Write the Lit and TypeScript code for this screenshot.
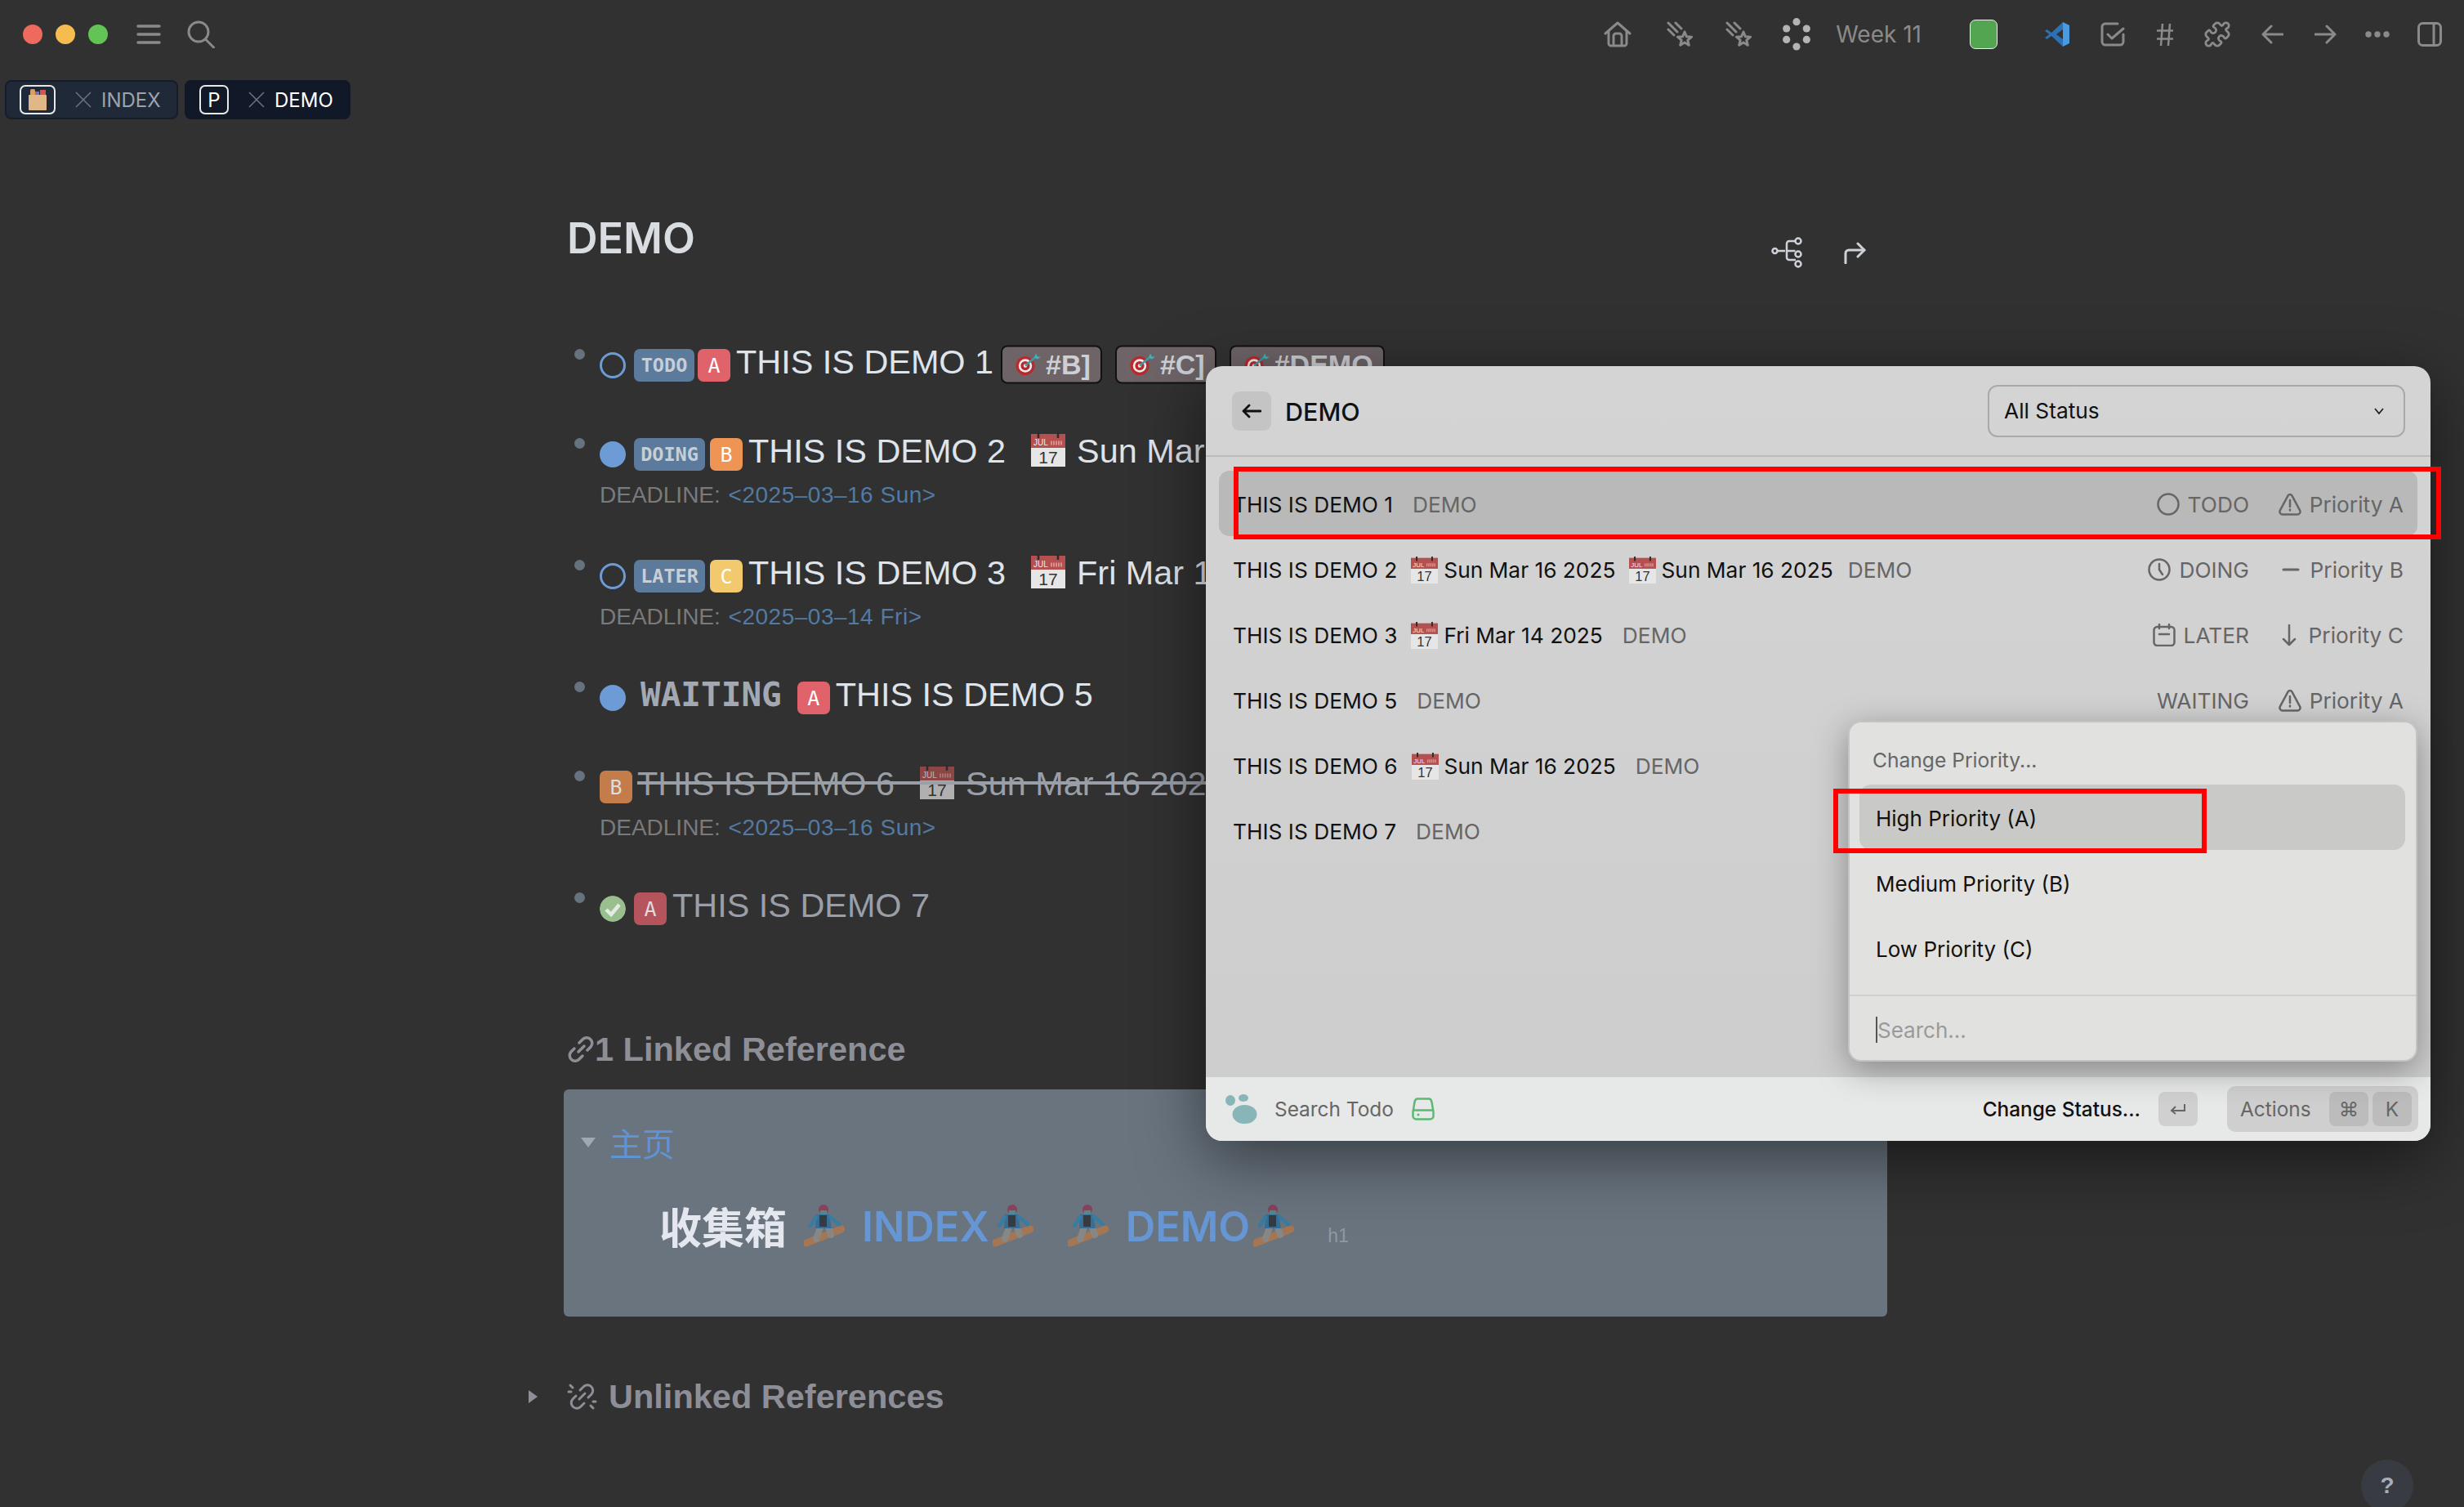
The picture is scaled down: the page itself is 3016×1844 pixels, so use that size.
import { LitElement, html, css } from "lit";
import { customElement } from "lit/decorators.js";

const GRAY = "#8a8a8a";

// emoji are drawn by hand, there is no colour emoji font in the sandbox
const calendar = (size: number) => html`
  <svg class="emoji" width=${size} height=${size} viewBox="0 0 42 42">
    <rect x="0" y="2" width="42" height="40" fill="#e6e6e6" />
    <rect x="0" y="2" width="42" height="17" fill="#b4504f" />
    <path d="M9 0v7M33 0v7" stroke="#2b2b2b" stroke-width="2.5" />
    <text x="3" y="16" font-size="10" fill="#eee" font-family="Liberation Sans">JUL</text>
    <path d="M24 13h15" stroke="#d98f8c" stroke-width="5" stroke-dasharray="2 1" />
    <text x="21" y="38" font-size="21" fill="#333" text-anchor="middle" font-family="Liberation Sans">17</text>
  </svg>
`;

const dart = html`
  <svg class="emoji" width="32" height="28" viewBox="0 0 32 28">
    <circle cx="12" cy="16" r="11.5" fill="#b82a2e" />
    <circle cx="12" cy="16" r="8.2" fill="#eee" />
    <circle cx="12" cy="16" r="5.6" fill="#b82a2e" />
    <circle cx="12" cy="16" r="2.2" fill="#eee" />
    <path d="M12 16 25 5" stroke="#3f9aa0" stroke-width="2.5" />
    <path d="M23 6l2-5 2 4 4 0-4 3z" fill="#3fb4b8" />
  </svg>
`;

const snowboarder = html`
  <svg class="emoji" width="50" height="52" viewBox="0 0 50 52">
    <path d="M3 47 46 30" stroke="#b0774c" stroke-width="9" stroke-linecap="round" />
    <path d="M20 28 15 42M30 28 33 37" stroke="#8d8c88" stroke-width="8" stroke-linecap="round" />
    <path d="M15 12h16l3 17H14z" fill="#2f6d9c" />
    <rect x="19" y="13" width="9" height="14" fill="#2c3238" />
    <path d="M32 15 43 24M15 15 8 26" stroke="#2f7fa8" stroke-width="4.5" stroke-linecap="round" />
    <circle cx="24" cy="6" r="6" fill="#8c3a55" />
    <rect x="20" y="7" width="8" height="5" fill="#4f8f88" />
  </svg>
`;

const warning = html`
  <svg width="28" height="28" viewBox="0 0 28 28" fill="none" stroke="#666" stroke-width="2.5" stroke-linejoin="round">
    <path d="M11.6 3.4 1.8 21.6c-1 2 .4 4.9 2.6 4.9h19.2c2.2 0 3.6-2.9 2.6-4.9L16.4 3.4c-1-2-3.8-2-4.8 0z" />
    <path d="M14 9v8M14 20.5v1" stroke-linecap="round" />
  </svg>
`;

const statusIcons: Record<string, unknown> = {
  TODO: html`<svg width="28" height="28" viewBox="0 0 28 28" fill="none" stroke="#666" stroke-width="2.5"><circle cx="14" cy="14" r="12.5" /></svg>`,
  DOING: html`<svg width="28" height="28" viewBox="0 0 28 28" fill="none" stroke="#666" stroke-width="2.5" stroke-linecap="round"><circle cx="14" cy="14" r="12.5" /><path d="M14 7v7l4 6" /></svg>`,
  LATER: html`<svg width="28" height="28" viewBox="0 0 28 28" fill="none" stroke="#666" stroke-width="2.5" stroke-linecap="round"><rect x="1.5" y="4" width="25" height="23" rx="4" /><path d="M8 1v5M20 1v5M8 13h12" /></svg>`,
};

const priorityIcons: Record<string, unknown> = {
  A: warning,
  B: html`<svg width="28" height="28" viewBox="0 0 28 28" fill="none" stroke="#666" stroke-width="3" stroke-linecap="round"><path d="M5 14h18" /></svg>`,
  C: html`<svg width="28" height="28" viewBox="0 0 28 28" fill="none" stroke="#666" stroke-width="2.5" stroke-linecap="round" stroke-linejoin="round"><path d="M14 2v24M7 19l7 7 7-7" /></svg>`,
};

const shootingStar = html`
  <svg width="32" height="32" viewBox="0 0 32 32" fill="none" stroke=${GRAY} stroke-width="3" stroke-linejoin="round" stroke-linecap="round">
    <path d="M11 2l7 7M2 2l11 11M2 10l7 7" />
    <path d="M22 13l2.4 5.8 6.2.4-4.8 4 1.5 6.1-5.3-3.3-5.3 3.3 1.5-6.1-4.8-4 6.2-.4z" />
  </svg>
`;

// widths come out of the reference, gap is the distance to the previous item
const topIcons = [
  {
    gap: 0,
    icon: html`<svg width="34" height="34" viewBox="0 0 34 34" fill="none" stroke=${GRAY} stroke-width="3" stroke-linecap="round" stroke-linejoin="round"><path d="M2 16 17 3l15 13" /><path d="M6 13v15a3 3 0 0 0 3 3h16a3 3 0 0 0 3-3V13" /><path d="M12 30V19a3 3 0 0 1 3-3h4a3 3 0 0 1 3 3v11" /></svg>`,
  },
  { gap: 43, icon: shootingStar },
  { gap: 40, icon: shootingStar },
  {
    gap: 38,
    icon: html`<svg width="34" height="40" viewBox="0 0 34 40" fill="#b4b4b4"><circle cx="17" cy="4.7" r="4.6" /><circle cx="4.7" cy="13" r="4.6" /><circle cx="29.3" cy="13" r="4.6" /><circle cx="4.7" cy="26.4" r="4.6" /><circle cx="29.3" cy="26.4" r="4.6" /><circle cx="17" cy="35" r="4.6" /></svg>`,
  },
  { gap: 31, icon: html`<span class="week">Week 11</span>` },
  { gap: 59, icon: html`<span class="swatch"></span>` },
  {
    gap: 57,
    icon: html`<svg width="32" height="32" viewBox="0 0 32 32"><path fill="#2c70b5" d="M23 1 9 14 3.5 10 1 12l5.5 4L1 20l2.5 2L9 18l14 13v-9l-8-6 8-6z" /><path fill="#4a9ae0" d="m23 1 8 4v22l-8 4z" /></svg>`,
  },
  {
    gap: 37,
    icon: html`<svg width="30" height="30" viewBox="0 0 30 30" fill="none" stroke=${GRAY} stroke-width="3" stroke-linecap="round" stroke-linejoin="round"><path d="M21 2H6a4 4 0 0 0-4 4v18a4 4 0 0 0 4 4h18a4 4 0 0 0 4-4V15" /><path d="m9 15 5 5 14-12" /></svg>`,
  },
  {
    gap: 38,
    icon: html`<svg width="22" height="29" viewBox="0 0 22 29" fill="none" stroke=${GRAY} stroke-width="2.5"><path d="M8 1 6 28M17 1l-2 27M1 9.500h20M1 19.500h20" /></svg>`,
  },
  {
    gap: 36,
    icon: html`<svg width="34" height="34" viewBox="0 0 24 24" fill="none" stroke=${GRAY} stroke-width="2" stroke-linejoin="round"><path d="M19.439 7.85c-.049.322.059.648.289.878l1.568 1.568c.47.47.706 1.087.706 1.704s-.235 1.233-.706 1.704l-1.611 1.611a.98.98 0 0 1-.837.276c-.47-.07-.802-.48-.968-.925a2.501 2.501 0 1 0-3.214 3.214c.446.166.855.497.925.968a.979.979 0 0 1-.276.837l-1.61 1.61a2.404 2.404 0 0 1-1.705.707 2.402 2.402 0 0 1-1.704-.706l-1.568-1.568a1.026 1.026 0 0 0-.877-.29c-.493.074-.84.504-1.02.968a2.5 2.5 0 1 1-3.237-3.237c.464-.18.894-.527.967-1.02a1.026 1.026 0 0 0-.289-.877l-1.568-1.568A2.402 2.402 0 0 1 1.998 12c0-.617.236-1.234.706-1.704L4.23 8.77c.24-.24.581-.353.917-.303.515.077.877.528 1.073 1.01a2.5 2.5 0 1 0 3.259-3.259c-.482-.196-.933-.558-1.01-1.073-.05-.336.062-.676.303-.917l1.525-1.525A2.402 2.402 0 0 1 12 1.998c.617 0 1.234.236 1.704.706l1.568 1.568c.23.23.556.338.877.29.493-.074.84-.504 1.02-.968a2.5 2.5 0 1 1 3.237 3.237c-.464.18-.894.527-.967 1.02Z" /></svg>`,
  },
  {
    gap: 37,
    icon: html`<svg width="27" height="24" viewBox="0 0 27 24" fill="none" stroke=${GRAY} stroke-width="3" stroke-linecap="round" stroke-linejoin="round"><path d="M26 12H2M12 2 2 12l10 10" /></svg>`,
  },
  {
    gap: 38,
    icon: html`<svg width="27" height="24" viewBox="0 0 27 24" fill="none" stroke=${GRAY} stroke-width="3" stroke-linecap="round" stroke-linejoin="round"><path d="M1 12h24M15 2l10 10-10 10" /></svg>`,
  },
  {
    gap: 35,
    icon: html`<svg width="30" height="8" viewBox="0 0 30 8" fill=${GRAY}><circle cx="4" cy="4" r="3.700" /><circle cx="15" cy="4" r="3.700" /><circle cx="26" cy="4" r="3.700" /></svg>`,
  },
  {
    gap: 34,
    icon: html`<svg width="30" height="30" viewBox="0 0 30 30" fill="none" stroke=${GRAY} stroke-width="3"><rect x="1.500" y="1.500" width="27" height="27" rx="5" /><path d="M20 2v26" /></svg>`,
  },
];

type Todo = {
  title: string;
  dates: string[];
  status?: string;
  priority?: string;
  tight?: boolean;
};

const todos: Todo[] = [
  { title: "THIS IS DEMO 1", dates: [], status: "TODO", priority: "A" },
  { title: "THIS IS DEMO 2", dates: ["Sun Mar 16 2025", "Sun Mar 16 2025"], status: "DOING", priority: "B", tight: true },
  { title: "THIS IS DEMO 3", dates: ["Fri Mar 14 2025"], status: "LATER", priority: "C" },
  { title: "THIS IS DEMO 5", dates: [], status: "WAITING", priority: "A" },
  { title: "THIS IS DEMO 6", dates: ["Sun Mar 16 2025"] },
  { title: "THIS IS DEMO 7", dates: [] },
];

@customElement("app-root")
export class AppRoot extends LitElement {
  static styles = css`
    :host {
      display: block;
      position: relative;
      width: 3016px;
      height: 1844px;
      overflow: hidden;
      background: #313131;
      font-family: "Liberation Sans", "Noto Sans CJK SC", sans-serif;
      color: #dfe3ea;
    }

    svg {
      display: block;
      flex: none;
    }

    /* top bar */
    .topbar {
      display: flex;
      align-items: center;
      height: 84px;
      padding: 0 27px 0 28px;
    }

    .light {
      width: 24px;
      height: 24px;
      border-radius: 50%;
      margin-right: 16px;
    }

    .red { background: #ee6a5f; }
    .yellow { background: #f5bd4f; }
    .green { background: #61c454; }

    .menu-icon { margin-left: 19px; }
    .search-icon { margin-left: 32px; }

    .top-right {
      display: flex;
      align-items: center;
      margin-left: auto;
    }

    .week {
      font: 400 28px Inter, sans-serif;
      color: #8a8a8a;
      white-space: nowrap;
    }

    .swatch {
      display: block;
      width: 34px;
      height: 36px;
      box-sizing: border-box;
      background: #53a552;
      border: 1.5px solid #eee;
      border-radius: 7px;
    }

    /* tabs */
    .tabs {
      display: flex;
      gap: 8px;
      margin: 14px 0 0 6px;
    }

    .tab {
      display: flex;
      align-items: center;
      height: 48px;
      box-sizing: border-box;
      padding-left: 16px;
      border-radius: 8px;
      background: #1f2937;
      border: 2px solid #161d2a;
      font: 400 24px Inter, sans-serif;
      color: #9ca3af;
    }

    .tab.index { width: 212px; }

    .tab.active {
      width: 203px;
      background: #111827;
      border-color: #111827;
      color: #fff;
    }

    .tab-icon {
      display: flex;
      align-items: center;
      justify-content: center;
      height: 36px;
      box-sizing: border-box;
      border: 2px solid #e8e8e8;
      border-radius: 7px;
      color: #fff;
    }

    .index .tab-icon { width: 44px; }
    .active .tab-icon { width: 36px; }

    .tab-close {
      margin: 0 12px 0 24px;
    }

    /* page */
    .main {
      width: 1616px;
      margin-left: 694px;
    }

    .title-row {
      display: flex;
      align-items: center;
      justify-content: space-between;
      height: 60px;
      margin-top: 115px;
      padding-right: 26px;
    }

    h1 {
      margin: 0;
      font: 600 52px Inter, sans-serif;
      color: #d9dce1;
    }

    .title-actions {
      display: flex;
      align-items: center;
      gap: 51px;
      margin-top: 36px;
    }

    .blocks {
      display: flex;
      flex-direction: column;
      gap: 69px;
      margin-top: 106px;
    }

    .block {
      display: flex;
    }

    .bullet {
      flex: none;
      width: 13px;
      height: 13px;
      margin: 0 18px 0 9px;
      border-radius: 50%;
      background: #67727f;
    }

    .head {
      position: relative;
      display: flex;
      align-items: center;
      height: 40px;
      white-space: nowrap;
    }

    .check {
      width: 32px;
      height: 32px;
      box-sizing: border-box;
      flex: none;
      border-radius: 50%;
      margin-right: 10px;
    }

    .check.open { border: 3.500px solid #6d9bd6; }
    .check.busy { background: #6d9bd6; }
    .check.waiting { margin-right: 18px; }

    .marker {
      height: 40px;
      box-sizing: border-box;
      display: flex;
      align-items: center;
      justify-content: center;
      border-radius: 7px;
      background: #5b7a9c;
      color: #c8ced6;
      font: 700 23.500px "DejaVu Sans Mono", monospace;
    }

    .marker.doing {
      width: 87px;
      margin-right: 2px;
    }

    .marker.todo { width: 74px; }

    .waiting-text {
      font: 700 41px "DejaVu Sans Mono", monospace;
      color: #a3a9b3;
      margin: 0 15px 8px 0;
    }

    .prio {
      width: 40px;
      height: 40px;
      flex: none;
      display: flex;
      align-items: center;
      justify-content: center;
      border-radius: 7px;
      color: #fff;
      font: 400 25px "DejaVu Sans Mono", monospace;
      margin: 0 7px 0 4px;
    }

    .prio.first { margin-left: 0; }
    .prio.a { background: #e0636b; }
    .prio.b { background: #ee9455; }
    .prio.c { background: #f2c96d; }
    .prio.dim-a { background: #b5545c; color: #ddd; }
    .prio.dim-b { background: #c47c4b; color: #ddd; margin-right: 6px; }

    .text {
      font-size: 41.400px;
      line-height: 46px;
      margin-bottom: 8px;
    }

    .done .text { color: #9a9ea6; }

    .head .emoji {
      margin: 0 14px 12px 31px;
    }

    .done .emoji { opacity: 0.7; }

    .struck::after {
      content: "";
      position: absolute;
      left: 46px;
      right: 0;
      top: 13px;
      height: 4px;
      background: #9a9ea6;
    }

    .tag {
      display: flex;
      align-items: center;
      height: 47px;
      box-sizing: border-box;
      margin: 0 0 0 16px;
      padding: 0 12px 0 16px;
      gap: 5px;
      border: 2px solid #111;
      border-radius: 8px;
      background: #6e6468;
      color: #ccd0d6;
      font-size: 34px;
      font-weight: 700;
      transform: translateY(-1.500px);
    }

    .text + .tag { margin-left: 9px; }

    .head .tag .emoji { margin: 0; }

    .deadline {
      height: 20px;
      line-height: 20px;
      margin-top: 20px;
      font-size: 28px;
      color: #7a7a7d;
      white-space: nowrap;
    }

    .deadline a {
      color: #527aa3;
      margin-left: 2px;
      letter-spacing: 0.500px;
    }

    .ref-title {
      display: flex;
      align-items: center;
      height: 50px;
      font-size: 41.500px;
      font-weight: 700;
      color: #8e8f96;
      white-space: nowrap;
    }

    .linked {
      margin-top: 127px;
    }

    .unlinked {
      margin: 73px 0 0 -48px;
    }

    .unlinked .caret { margin-right: 35px; }
    .unlinked .ref-icon { margin-right: 14px; }

    .card {
      width: 1620px;
      height: 278px;
      box-sizing: border-box;
      margin: 24px 0 0 -4px;
      padding: 40px 0 0 21px;
      border-radius: 6px;
      background: #69747f;
    }

    .card-head {
      display: flex;
      align-items: center;
      gap: 17px;
      height: 50px;
      font-size: 40px;
      color: #5e93d4;
    }

    .card-body {
      display: flex;
      align-items: center;
      height: 60px;
      margin: 47px 0 0 97px;
      font: 600 50.500px Inter, sans-serif;
      color: #6796d4;
      white-space: nowrap;
    }

    .card-body .emoji { opacity: 0.85; }

    .inbox {
      font: 700 52px "Noto Sans CJK SC", sans-serif;
      color: #e4e8ee;
      margin: -2px 21px 0 -1px;
    }

    .card-body .link { margin: 0 4px 0 21px; }
    .card-body .next { margin-left: 42px; }

    .h-label {
      margin: 24px 0 0 41px;
      font: 400 23px "Liberation Sans", sans-serif;
      color: #8f98a2;
    }

    /* todo panel, floats over the page */
    .panel {
      position: absolute;
      left: 1476px;
      top: 448px;
      width: 1499px;
      height: 948px;
      display: flex;
      flex-direction: column;
      border-radius: 20px;
      background: linear-gradient(180deg, #d4d4d5, #cdcdce);
      box-shadow: 0 20px 80px rgba(0, 0, 0, 0.5);
      font: 400 26.300px Inter, sans-serif;
      color: #111;
      white-space: nowrap;
    }

    .panel-head {
      display: flex;
      align-items: center;
      flex: none;
      height: 111px;
      box-sizing: border-box;
      padding: 0 31px 0 32px;
      border-bottom: 2px solid #bcbcbc;
    }

    .back {
      display: flex;
      align-items: center;
      justify-content: center;
      width: 48px;
      height: 48px;
      border-radius: 9px;
      background: #c4c4c5;
      margin-right: 17px;
    }

    .panel-title {
      font-size: 30.500px;
      font-weight: 500;
      padding-top: 2px;
    }

    .select {
      display: flex;
      align-items: center;
      justify-content: space-between;
      width: 511px;
      height: 64px;
      box-sizing: border-box;
      margin-left: auto;
      padding: 0 24px 0 18px;
      border: 2px solid #a9a9a9;
      border-radius: 12px;
    }

    .rows {
      flex: 1;
      padding: 17px 16px 0;
    }

    .row {
      display: flex;
      align-items: center;
      height: 80px;
      box-sizing: border-box;
      padding: 2px 17px 0;
      border-radius: 13px;
    }

    .row.selected {
      background: #b9b9b9;
    }

    .row .emoji {
      margin: 0 7px 0 17px;
    }

    .row span + .emoji + span + .emoji {
      margin-left: 16px;
    }

    .page-name {
      color: #666;
      margin-left: 24px;
    }

    .page-name.tight { margin-left: 18px; }

    .meta {
      display: flex;
      align-items: center;
      gap: 10px;
      color: #666;
    }

    .status { margin-left: auto; }

    .priority {
      width: 153px;
      margin-left: 36px;
      justify-content: flex-end;
    }

    .footer {
      display: flex;
      align-items: center;
      flex: none;
      height: 78px;
      box-sizing: border-box;
      padding: 0 15px 0 24px;
      border-radius: 0 0 20px 20px;
      background: #e7e8e8;
      font-size: 24.400px;
      color: #666;
    }

    .footer-name { margin: 0 22px 0 21px; }

    .change {
      margin-left: auto;
      font-weight: 500;
      color: #111;
    }

    .key {
      display: flex;
      align-items: center;
      justify-content: center;
      width: 48px;
      height: 42px;
      border-radius: 8px;
      background: #d0d0d0;
      font-family: Inter, "DejaVu Sans", sans-serif;
    }

    .key.enter { margin: 0 36px 0 22px; }

    .actions {
      display: flex;
      align-items: center;
      gap: 5px;
      width: 234px;
      height: 56px;
      box-sizing: border-box;
      padding: 0 8px 0 16px;
      border-radius: 10px;
      background: #cfcfcf;
    }

    .actions span { margin-right: auto; }
    .actions .key { background: #bcbcbc; }

    /* priority dropdown */
    .popup {
      position: absolute;
      left: 786px;
      top: 434px;
      width: 697px;
      height: 417px;
      box-sizing: border-box;
      display: flex;
      flex-direction: column;
      border: 2px solid #c4c4c4;
      border-radius: 16px;
      background: #e1e1e0;
      box-shadow: 0 10px 40px rgba(0, 0, 0, 0.35);
      font-size: 26px;
    }

    .popup-label {
      height: 76px;
      box-sizing: border-box;
      padding: 16px 0 0 28px;
      display: flex;
      align-items: center;
      color: #666;
      font-size: 24.600px;
    }

    .option {
      display: flex;
      align-items: center;
      height: 80px;
      flex: none;
      box-sizing: border-box;
      margin: 0 13px 0 12px;
      padding: 2px 0 0 20px;
      border-radius: 14px;
    }

    .option.current { background: #c9c9c8; }

    .popup-search {
      flex: 1;
      display: flex;
      align-items: center;
      margin-top: 17px;
      padding: 4px 0 0 32px;
      border-top: 2px solid #cfcfcf;
      color: #9a9a9a;
    }

    .caret-line {
      width: 2px;
      height: 32px;
      background: #555;
    }

    /* annotation boxes */
    .mark {
      position: absolute;
      box-sizing: border-box;
      border: 6px solid #f00;
      pointer-events: none;
    }

    .mark.row-mark {
      left: 1510px;
      top: 571px;
      width: 1478px;
      height: 89px;
    }

    .mark.option-mark {
      left: 2244px;
      top: 965px;
      width: 457px;
      height: 79px;
    }

    .help {
      position: absolute;
      left: 2890px;
      top: 1786px;
      width: 64px;
      height: 64px;
      display: flex;
      align-items: center;
      justify-content: center;
      border-radius: 50%;
      background: #383b42;
      color: #a9adb6;
      font: 700 28px "Liberation Sans", sans-serif;
    }
  `;

  private renderHead(todo: Todo, i: number) {
    return html`<span class="text">${todo.title}</span>${todo.dates.slice(0, 1).map(
      (d) => html`${calendar(42)}<span class="text">${d}</span>`,
    )}${i === 0
      ? ["#B]", "#C]", "#DEMO"].map(
          (t) => html`<span class="tag">${dart}${t}</span>`,
        )
      : ""}`;
  }

  private renderBlocks() {
    const deadline = (date: string) =>
      html`<div class="deadline">DEADLINE: <a>&lt;${date}&gt;</a></div>`;
    return html`
      <div class="block">
        <div class="bullet"></div>
        <div>
          <div class="head">
            <span class="check open"></span>
            <span class="marker todo">TODO</span>
            <span class="prio a">A</span>
            ${this.renderHead(todos[0], 0)}
          </div>
        </div>
      </div>
      <div class="block">
        <div class="bullet"></div>
        <div>
          <div class="head">
            <span class="check busy"></span>
            <span class="marker doing">DOING</span>
            <span class="prio b">B</span>
            ${this.renderHead(todos[1], 1)}
          </div>
          ${deadline("2025–03–16 Sun")}
        </div>
      </div>
      <div class="block">
        <div class="bullet"></div>
        <div>
          <div class="head">
            <span class="check open"></span>
            <span class="marker doing">LATER</span>
            <span class="prio c">C</span>
            ${this.renderHead(todos[2], 2)}
          </div>
          ${deadline("2025–03–14 Fri")}
        </div>
      </div>
      <div class="block">
        <div class="bullet"></div>
        <div>
          <div class="head">
            <span class="check busy waiting"></span>
            <span class="waiting-text">WAITING</span>
            <span class="prio a">A</span>
            ${this.renderHead(todos[3], 3)}
          </div>
        </div>
      </div>
      <div class="block done">
        <div class="bullet"></div>
        <div>
          <div class="head struck">
            <span class="prio first dim-b">B</span>
            ${this.renderHead(todos[4], 4)}
          </div>
          ${deadline("2025–03–16 Sun")}
        </div>
      </div>
      <div class="block done">
        <div class="bullet"></div>
        <div>
          <div class="head">
            <svg class="check" viewBox="0 0 32 32">
              <circle cx="16" cy="16" r="16" fill="#9abf8e" />
              <path d="M8 17l6 6 10-12" fill="none" stroke="#e4ece2" stroke-width="4.500" />
            </svg>
            <span class="prio first dim-a">A</span>
            ${this.renderHead(todos[5], 5)}
          </div>
        </div>
      </div>
    `;
  }

  private renderRow(todo: Todo, i: number) {
    return html`
      <div class="row ${i === 0 ? "selected" : ""}">
        <span>${todo.title}</span>
        ${todo.dates.map((d) => html`${calendar(33)}<span>${d}</span>`)}
        <span class="page-name ${todo.tight ? "tight" : ""}">DEMO</span>
        ${todo.status
          ? html`
              <span class="meta status">${statusIcons[todo.status] ?? ""}${todo.status}</span>
              <span class="meta priority">${priorityIcons[todo.priority!]}Priority ${todo.priority}</span>
            `
          : ""}
      </div>
    `;
  }

  render() {
    const close = html`<svg class="tab-close" width="20" height="20" viewBox="0 0 20 20" stroke="#6f7580" stroke-width="1.500"><path d="M1 1l18 18M19 1 1 19" /></svg>`;
    const linkIcon = html`<svg class="ref-icon" width="34" height="34" viewBox="0 0 34 34" fill="none" stroke="#8e8f96" stroke-width="3.500" stroke-linecap="round"><path d="M14 20l7-7" /><path d="M15 9l4-4a6.500 6.500 0 0 1 10 9l-4 4" /><path d="M19 25l-4 4a6.500 6.500 0 0 1-10-9l4-4" /></svg>`;

    return html`
      <div class="topbar">
        <span class="light red"></span>
        <span class="light yellow"></span>
        <span class="light green"></span>
        <svg class="menu-icon" width="30" height="24" viewBox="0 0 30 24" stroke=${GRAY} stroke-width="3.500" stroke-linecap="round"><path d="M2 2h26M2 12h26M2 22h26" /></svg>
        <svg class="search-icon" width="34" height="34" viewBox="0 0 34 34" fill="none" stroke=${GRAY} stroke-width="3"><circle cx="14" cy="14" r="12" /><path d="M22.500 23l10 10" stroke-linecap="round" /></svg>
        <div class="top-right">
          ${topIcons.map(
            (item) =>
              html`<div style="margin-left:${item.gap}px">${item.icon}</div>`,
          )}
        </div>
      </div>

      <div class="tabs">
        <div class="tab index">
          <span class="tab-icon">
            <svg width="24" height="28" viewBox="0 0 24 28">
              <rect x="3" y="1" width="6" height="8" rx="2" fill="#e0a050" />
              <rect x="15" y="2" width="7" height="7" fill="#d9534f" />
              <rect x="9" y="4" width="5" height="4" fill="#7a6fc0" />
              <rect x="1" y="8" width="22" height="19" rx="1" fill="#e0b888" />
            </svg>
          </span>
          ${close}<span>INDEX</span>
        </div>
        <div class="tab active">
          <span class="tab-icon">P</span>
          ${close}<span>DEMO</span>
        </div>
      </div>

      <div class="main">
        <div class="title-row">
          <h1>DEMO</h1>
          <div class="title-actions">
            <svg width="38" height="38" viewBox="0 0 38 38" fill="none" stroke="#cdd1d8" stroke-width="2.500">
              <circle cx="4.500" cy="17" r="3" />
              <circle cx="33" cy="5" r="3.500" />
              <circle cx="33" cy="21" r="3.500" />
              <circle cx="33" cy="33" r="3.500" />
              <path d="M8 17h9M29.500 5H22a3 3 0 0 0-3 3v17a3 3 0 0 0 3 3h8M19 17h10.500" />
            </svg>
            <svg width="27" height="27" viewBox="0 0 27 27" fill="none" stroke="#cdd1d8" stroke-width="3" stroke-linecap="round" stroke-linejoin="round">
              <path d="M2 26V14a4 4 0 0 1 4-4h19" />
              <path d="M17 2l8 8-8 8" />
            </svg>
          </div>
        </div>

        <div class="blocks">${this.renderBlocks()}</div>

        <div class="ref-title linked">${linkIcon}<span>1 Linked Reference</span></div>

        <div class="card">
          <div class="card-head">
            <svg width="18" height="12" viewBox="0 0 18 12" fill="#a0a8b0"><path d="M0 0h18L9 12z" /></svg>
            <span>主页</span>
          </div>
          <div class="card-body">
            <span class="inbox">收集箱</span>
            ${snowboarder}
            <span class="link">INDEX</span>
            ${snowboarder}
            <span class="next">${snowboarder}</span>
            <span class="link">DEMO</span>
            ${snowboarder}
            <span class="h-label">h1</span>
          </div>
        </div>

        <div class="ref-title unlinked">
          <svg class="caret" width="13" height="18" viewBox="0 0 13 18" fill="#8e8f96"><path d="M1 1l11 8-11 8z" /></svg>
          <svg class="ref-icon" width="37" height="34" viewBox="0 0 37 34" fill="none" stroke="#8e8f96" stroke-width="3" stroke-linecap="round">
            <path d="M15 20l7-7" />
            <path d="M16 9l4-4a6.500 6.500 0 0 1 10 9l-4 4" />
            <path d="M21 25l-4 4a6.500 6.500 0 0 1-10-9l4-4" />
            <path d="M4 3l3 3M2 11h3M32 31l-3-3M35 23h-3" />
          </svg>
          <span>Unlinked References</span>
        </div>
      </div>

      <div class="panel">
        <div class="panel-head">
          <span class="back">
            <svg width="24" height="18" viewBox="0 0 24 18" fill="none" stroke="#111" stroke-width="2.800" stroke-linecap="round" stroke-linejoin="round"><path d="M23 9H2M9 2 2 9l7 7" /></svg>
          </span>
          <span class="panel-title">DEMO</span>
          <div class="select">
            <span>All Status</span>
            <svg width="12" height="8" viewBox="0 0 12 8" fill="none" stroke="#222" stroke-width="1.800"><path d="M1 1l5 6 5-6" /></svg>
          </div>
        </div>
        <div class="rows">${todos.map((t, i) => this.renderRow(t, i))}</div>
        <div class="footer">
          <svg width="39" height="36" viewBox="0 0 39 36" fill="#88b6b8">
            <ellipse cx="6" cy="7.500" rx="6" ry="6.500" />
            <ellipse cx="22" cy="4.500" rx="6" ry="4.500" />
            <ellipse cx="23.500" cy="24.500" rx="15" ry="11.500" />
          </svg>
          <span class="footer-name">Search Todo</span>
          <svg width="28" height="28" viewBox="0 0 28 28" fill="none" stroke="#5bb974" stroke-width="2.500"><path d="M7 1.500h14c2 0 3 1.500 3.500 4l2 12v5c0 2-1.500 4-4 4H5.500c-2.500 0-4-2-4-4v-5l2-12c.5-2.500 1.500-4 3.500-4z" /><path d="M2 15.500h24" /><circle cx="8" cy="21" r="1.500" fill="#5bb974" stroke="none" /></svg>
          <span class="change">Change Status...</span>
          <span class="key enter">
            <svg width="20" height="14" viewBox="0 0 20 14" fill="none" stroke="#666" stroke-width="2"><path d="M18 1v8H2M7 4 2 9l5 4" /></svg>
          </span>
          <div class="actions">
            <span>Actions</span>
            <div class="key">⌘</div>
            <div class="key">K</div>
          </div>
        </div>

        <div class="popup">
          <div class="popup-label">Change Priority...</div>
          <div class="option current">High Priority (A)</div>
          <div class="option">Medium Priority (B)</div>
          <div class="option">Low Priority (C)</div>
          <div class="popup-search"><span class="caret-line"></span><span>Search...</span></div>
        </div>
      </div>

      <div class="mark row-mark"></div>
      <div class="mark option-mark"></div>
      <div class="help">?</div>
    `;
  }
}
